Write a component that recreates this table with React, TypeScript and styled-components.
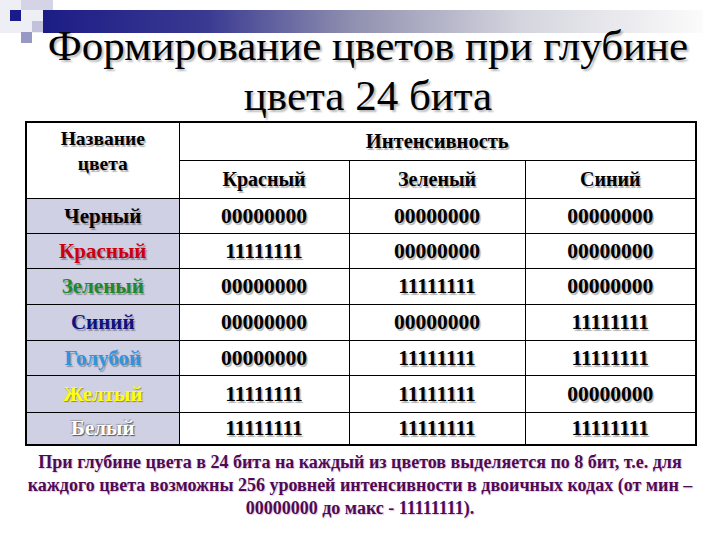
import * as React from 'react'
import styled, { createGlobalStyle } from 'styled-components'

const SERIF = `"Times New Roman", "Liberation Serif", Tinos, "DejaVu Serif", "Noto Serif", Times, serif`

const GlobalStyle = createGlobalStyle`
  html, body {
    margin: 0;
    padding: 0;
    background: #ffffff;
  }
  body {
    width: 720px;
    height: 540px;
    overflow: hidden;
    font-family: ${SERIF};
  }
`

const Page = styled.div`
  width: 720px;
  height: 540px;
  display: flex;
  flex-direction: column;
  font-family: ${SERIF};
`

const Ornament = styled.svg`
  display: block;
  width: 720px;
  height: 44px;
`

const Title = styled.h1`
  margin: -23px 0 0 0;
  padding: 0 20px 0 36px;
  font-family: ${SERIF};
  font-weight: normal;
  font-size: 43px;
  line-height: 50px;
  text-align: center;
  white-space: nowrap;
  color: #000;
  text-shadow: 2px 2px 2px rgba(0, 0, 0, 0.28);
`

const Table = styled.table`
  margin: 0 0 0 25px;
  width: 670px;
  border-collapse: collapse;
  border: 2px solid #000;
  table-layout: fixed;
  font-family: ${SERIF};
  text-shadow: 1.5px 1.5px 1px rgba(0, 0, 0, 0.3);
`

const HeadCell = styled.th<{ $top?: boolean; $h?: number; $size?: number }>`
  border: 1px solid #000;
  padding: ${p => (p.$top ? '3px 0 0 0' : '0')};
  vertical-align: ${p => (p.$top ? 'top' : 'middle')};
  height: ${p => p.$h ?? 36}px;
  font-size: ${p => p.$size ?? 20}px;
  line-height: 25px;
  font-weight: bold;
  text-align: center;
  color: #000;
`

const NameCell = styled.td<{ $color: string; $shade?: string }>`
  border: 1px solid #000;
  background: #d0d0e4;
  padding: 0;
  text-align: center;
  font-size: 21px;
  font-weight: bold;
  color: ${p => p.$color};
  text-shadow: ${p => p.$shade ?? '1.5px 1.5px 1px rgba(0, 0, 0, 0.3)'};
`

const ValueCell = styled.td`
  border: 1px solid #000;
  padding: 0;
  text-align: center;
  font-size: 21.5px;
  font-weight: bold;
  color: #000;
`

const Note = styled.p`
  margin: 5px 0 0 0;
  padding: 0 10px;
  text-align: center;
  font-family: ${SERIF};
  font-size: 18px;
  line-height: 23px;
  font-weight: bold;
  white-space: nowrap;
  color: #500a55;
  text-shadow: 1px 1px 1px rgba(120, 40, 120, 0.25);
`

const ZERO = '00000000'
const ONE = '11111111'

const rows = [
  { name: 'Черный', color: '#000000', h: 35, v: [ZERO, ZERO, ZERO] },
  { name: 'Красный', color: '#cc0010', h: 35, v: [ONE, ZERO, ZERO] },
  { name: 'Зеленый', color: '#1a8a2e', h: 36, v: [ZERO, ONE, ZERO] },
  { name: 'Синий', color: '#10107e', h: 36, v: [ZERO, ZERO, ONE] },
  { name: 'Голубой', color: '#2f95e0', h: 35, v: [ZERO, ONE, ONE] },
  {
    name: 'Желтый',
    color: '#ffff10',
    h: 37,
    v: [ONE, ONE, ZERO],
    shade: '1px 1px 1px rgba(90, 90, 0, 0.6)',
  },
  {
    name: 'Белый',
    color: '#ffffff',
    h: 32,
    v: [ONE, ONE, ONE],
    shade: '1px 1px 1px #555, -1px -1px 1px rgba(0,0,0,0.25)',
  },
]

function TopOrnament() {
  return (
    <Ornament viewBox="0 0 720 44">
      <defs>
        <linearGradient id="bar" x1="0" y1="0" x2="1" y2="0">
          <stop offset="0" stopColor="#1c1c86" />
          <stop offset="0.25" stopColor="#3a3a92" />
          <stop offset="0.47" stopColor="#9090b0" />
          <stop offset="0.72" stopColor="#d4d4de" />
          <stop offset="1" stopColor="#fbfbfb" />
        </linearGradient>
      </defs>
      <rect x="0" y="0" width="43" height="33" fill="#eeeef5" />
      <rect x="21" y="0" width="32" height="10" fill="#d4d4e6" />
      <rect x="43" y="10" width="660" height="23" fill="url(#bar)" />
      <rect x="10" y="10" width="11" height="11" fill="#1a1a8c" />
      <rect x="32" y="21" width="11" height="11" fill="#c2c2dc" />
      <rect x="21" y="32" width="11" height="11" fill="#9898c6" />
    </Ornament>
  )
}

export default function App() {
  return (
    <Page>
      <GlobalStyle />
      <TopOrnament />
      <Title>
        Формирование цветов при глубине
        <br />
        цвета 24 бита
      </Title>
      <Table>
        <colgroup>
          <col style={{ width: 153 }} />
          <col style={{ width: 170 }} />
          <col style={{ width: 176 }} />
          <col style={{ width: 171 }} />
        </colgroup>
        <thead>
          <tr>
            <HeadCell rowSpan={2} $top $size={19.5}>
              Название
              <br />
              цвета
            </HeadCell>
            <HeadCell colSpan={3} $h={37} $size={20.5}>
              Интенсивность
            </HeadCell>
          </tr>
          <tr>
            <HeadCell $h={37}>Красный</HeadCell>
            <HeadCell $h={37}>Зеленый</HeadCell>
            <HeadCell $h={37}>Синий</HeadCell>
          </tr>
        </thead>
        <tbody>
          {rows.map(r => (
            <tr key={r.name} style={{ height: r.h }}>
              <NameCell $color={r.color} $shade={r.shade}>
                {r.name}
              </NameCell>
              {r.v.map((x, i) => (
                <ValueCell key={i}>{x}</ValueCell>
              ))}
            </tr>
          ))}
        </tbody>
      </Table>
      <Note>
        При глубине цвета в 24 бита на каждый из цветов выделяется по 8 бит, т.е. для
        <br />
        каждого цвета возможны 256 уровней интенсивности в двоичных кодах (от мин –
        <br />
        00000000 до макс - 11111111).
      </Note>
    </Page>
  )
}
